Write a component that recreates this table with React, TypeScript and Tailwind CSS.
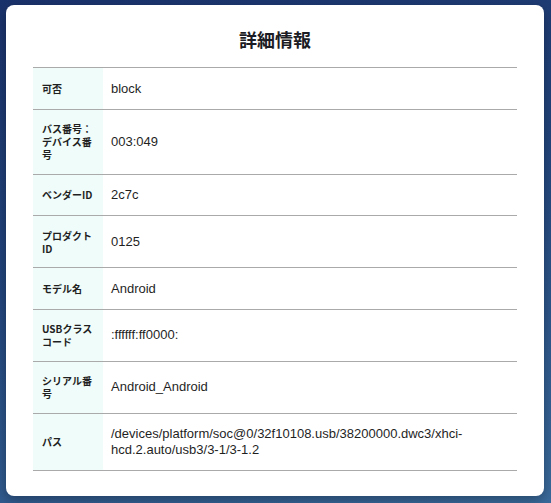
const rows: { label: string; value: string }[] = [
  { label: "可否", value: "block" },
  { label: "バス番号：デバイス番号", value: "003:049" },
  { label: "ベンダーID", value: "2c7c" },
  { label: "プロダクトID", value: "0125" },
  { label: "モデル名", value: "Android" },
  { label: "USBクラスコード", value: ":ffffff:ff0000:" },
  { label: "シリアル番号", value: "Android_Android" },
  {
    label: "パス",
    value: "/devices/platform/soc@0/32f10108.usb/38200000.dwc3/xhci-hcd.2.auto/usb3/3-1/3-1.2",
  },
];

export default function App() {
  return (
    <div className="min-h-screen bg-[linear-gradient(165deg,#1a326b_0%,#22457c_45%,#3a6a9b_100%)] pt-[5px] pl-[6px] pr-[7px] pb-[7px]">
      <div className="w-[538px] rounded-[8px] bg-white pt-[21px] pl-[27px] pr-[27px] pb-[25px] shadow-[0_4px_12px_rgba(0,0,0,0.3)]">
        <h3 className="mb-[14px] text-center text-[18px] font-bold leading-[27px] text-[#1c1c24] [font-family:'Noto_Sans_CJK_JP',sans-serif]">
          詳細情報
        </h3>
        <table className="w-full border-collapse border-t border-[#aaaaaa]">
          <tbody>
            {rows.map((r) => (
              <tr key={r.label} className="border-b border-[#aaaaaa]">
                <th className="w-[70px] bg-[#effcfa] px-[9px] py-[12.5px] text-left align-middle text-[10px] font-bold leading-[13px] text-[#1f1f1f] [font-family:'Noto_Sans_CJK_JP',sans-serif]">
                  {r.label}
                </th>
                <td className="px-[8px] py-[12.5px] align-middle text-[13px] leading-[15.5px] text-[#1f1f1f] [font-family:'Liberation_Sans','Noto_Sans_CJK_JP',sans-serif]">
                  {r.value}
                </td>
              </tr>
            ))}
          </tbody>
        </table>
      </div>
    </div>
  );
}
